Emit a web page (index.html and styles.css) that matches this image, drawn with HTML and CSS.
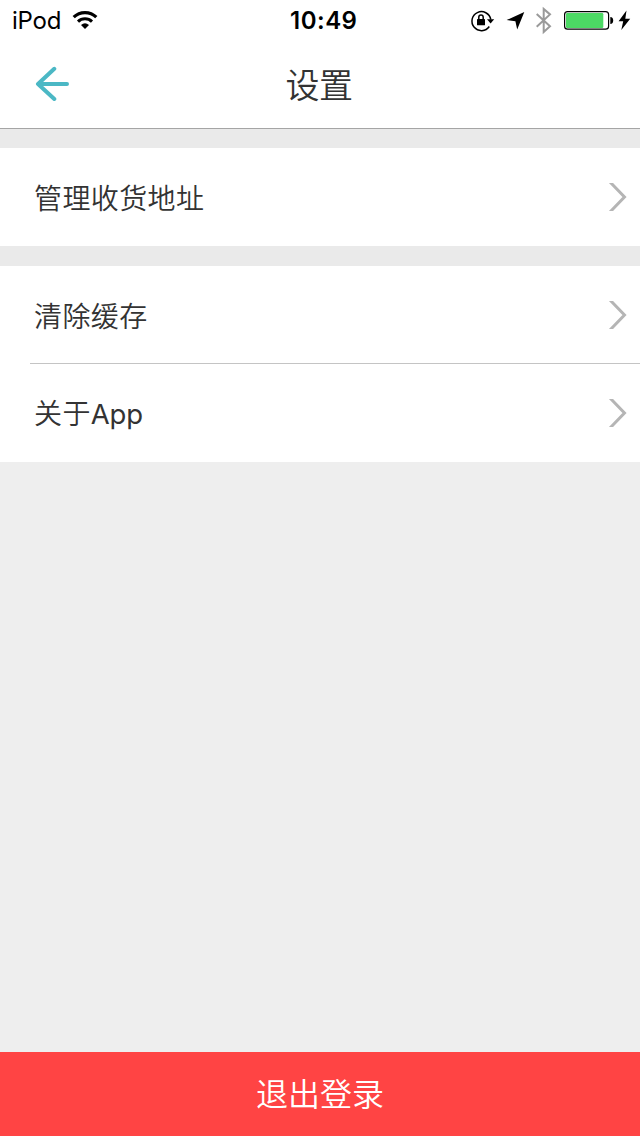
FILE: index.html
```html
<!DOCTYPE html>
<html lang="zh-CN">
<head>
<meta charset="utf-8">
<title>设置</title>
<link rel="stylesheet" href="styles.css">
</head>
<body>
<div class="screen">
  <header class="top">
    <div class="status">
      <div class="status-left">
        <span class="carrier">iPod</span>
        <svg class="wifi" width="26" height="20" viewBox="0 0 26 20">
          <path d="M1.7 7.2A16 16 0 0 1 24.3 7.2" fill="none" stroke="#000" stroke-width="3.2"/>
          <path d="M6 11.6A10 10 0 0 1 20 11.6" fill="none" stroke="#000" stroke-width="3"/>
          <path d="M9 14.9Q13 11.5 17 14.9L13 19Z"/>
        </svg>
      </div>
      <span class="time">10:49</span>
      <svg class="status-icons" width="180" height="40" viewBox="460 0 180 40">
        <path d="M489.3 26.5A9.5 9.5 0 1 1 490.8 19.5" fill="none" stroke="#000" stroke-width="1.5"/>
        <path d="M487 19.2H494.2L490.6 23.6Z"/>
        <rect x="477" y="19" width="8" height="6.3" rx=".6"/>
        <path d="M478.8 19.5V17.2a2.2 2.2 0 0 1 4.4 0V19.5" fill="none" stroke="#000" stroke-width="1.5"/>
        <path d="M524.3 12L517.2 29.4L515.4 21.2L506.6 20.1Z"/>
        <path d="M536.7 14L550 26.3L543.7 32V9L550 14.4L536.7 26.8" fill="none" stroke="#9a9a9a" stroke-width="2"/>
        <rect x="564.6" y="11.6" width="44" height="17.6" rx="3" fill="#fff" stroke="#000" stroke-width="1.2"/>
        <rect x="566" y="13" width="37.3" height="15" rx="1.2" fill="#4cd964"/>
        <path d="M610.3 17Q613.2 17.4 613.2 20.5T610.3 24Z"/>
        <path d="M626.5 10.5L618.6 21.2H623.2L621.3 30L630.2 18.8H625.3Z"/>
      </svg>
    </div>
    <nav class="nav">
      <svg class="back" width="36" height="36" viewBox="0 0 36 36">
        <path d="M20.3 3.8L4 19L20.3 34M4.5 19H33" fill="none" stroke="#4bb8c5" stroke-width="4" stroke-linecap="round" stroke-linejoin="round"/>
      </svg>
      <h1 class="title">设置</h1>
    </nav>
  </header>
  <main class="groups">
    <section class="group">
      <div class="row"><span class="label">管理收货地址</span><svg class="chevron" width="20" height="28" viewBox="0 0 20 28"><path d="M2 -1L16.5 14L2 29" fill="none" stroke="#b5b5b5" stroke-width="3"/></svg></div>
    </section>
    <section class="group">
      <div class="row divided"><span class="label">清除缓存</span><svg class="chevron" width="20" height="28" viewBox="0 0 20 28"><path d="M2 -1L16.5 14L2 29" fill="none" stroke="#b5b5b5" stroke-width="3"/></svg></div>
      <div class="row"><span class="label">关于<span class="latin">App</span></span><svg class="chevron" width="20" height="28" viewBox="0 0 20 28"><path d="M2 -1L16.5 14L2 29" fill="none" stroke="#b5b5b5" stroke-width="3"/></svg></div>
    </section>
  </main>
  <button class="logout">退出登录</button>
</div>
</body>
</html>
```
FILE: styles.css
```css
* { box-sizing: border-box; }
body {
  margin: 0;
  font-family: "Noto Sans CJK SC", sans-serif;
  color: #333;
}
.screen {
  width: 640px;
  height: 1136px;
  display: flex;
  flex-direction: column;
  background: #eee;
}
.top {
  height: 129px;
  background: #fff;
  border-bottom: 1px solid #a5a5a5;
}
.status {
  height: 40px;
  display: grid;
  grid-template-columns: 280px 1fr 180px;
  align-items: center;
  font-family: Inter, sans-serif;
  color: #000;
}
.status-left {
  display: flex;
  align-items: center;
  gap: 10.5px;
  padding-left: 12px;
}
.carrier {
  padding-top: 2px;
  font-size: 24px;
  line-height: 38px;
  letter-spacing: -0.2px;
}
.time {
  padding: 2px 0 0 10px;
  font-size: 24px;
  font-weight: 600;
  line-height: 38px;
  letter-spacing: 0.5px;
}
.nav {
  height: 88px;
  display: grid;
  grid-template-columns: 100px 1fr 100px;
  align-items: center;
}
.back { margin-left: 34px; margin-top: -3px; }
.title {
  margin: 0;
  padding-right: 2px;
  font-size: 34px;
  line-height: 86px;
  font-weight: 350;
  letter-spacing: -0.5px;
  text-align: center;
}
.groups {
  flex: 1;
  display: flex;
  flex-direction: column;
}
.group {
  background: #fff;
  border-top: 20px solid #eaeaea;
}
.group:first-child { border-top-width: 19px; }
.row {
  height: 98px;
  padding: 0 12px 0 34px;
  display: flex;
  align-items: center;
  justify-content: space-between;
}
.divided {
  margin-left: 30px;
  padding-left: 4px;
  border-bottom: 1px solid #c4c4c4;
}
.label {
  font-size: 28px;
  font-weight: 350;
  line-height: 40px;
  letter-spacing: 0.4px;
}
.latin {
  font-family: Inter, sans-serif;
  font-size: 27.5px;
  font-weight: 400;
  letter-spacing: -0.2px;
}
.logout {
  height: 84px;
  border: 0;
  padding: 0 0 4px;
  background: #ff4444;
  color: #fff;
  font-family: inherit;
  font-size: 32px;
  font-weight: 350;
  line-height: 80px;
}
```
